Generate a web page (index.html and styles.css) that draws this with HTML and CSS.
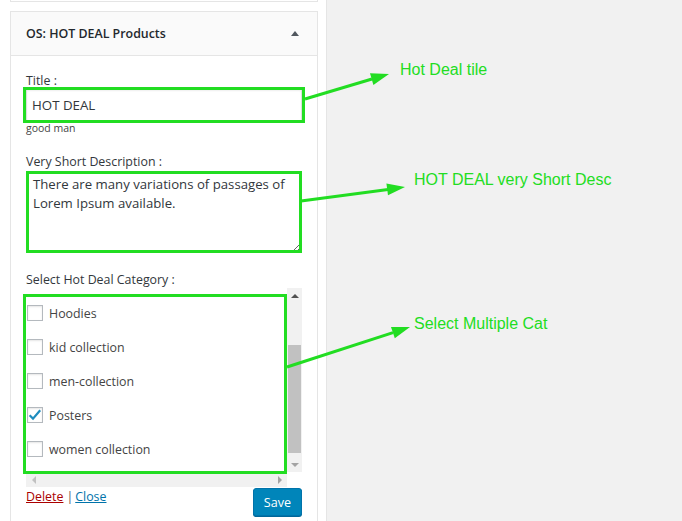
FILE: index.html
```html
<!DOCTYPE html>
<html lang="en">
<head>
<meta charset="utf-8">
<title>OS: HOT DEAL Products</title>
<link rel="stylesheet" href="styles.css">
</head>
<body>
<div class="page">
  <aside class="sidebar">
    <div class="prev-widget"></div>
    <div class="widget">
      <div class="widget-top">
        <h3 class="widget-title">OS: HOT DEAL Products</h3>
        <span class="toggle-arrow"></span>
      </div>
      <div class="widget-inside">
        <label class="field-label" for="title">Title :</label>
        <input id="title" class="text-input" type="text" value="HOT DEAL">
        <div class="hint">good man</div>
        <label class="field-label desc-label" for="desc">Very Short Description :</label>
        <textarea id="desc" class="text-area">There are many variations of passages of Lorem Ipsum available.</textarea>
        <div class="field-label cat-label">Select Hot Deal Category :</div>
        <div class="listbox">
          <ul class="cat-list">
            <li class="cat-item"><span class="cb"></span>Hoodies</li>
            <li class="cat-item"><span class="cb"></span>kid collection</li>
            <li class="cat-item"><span class="cb"></span>men-collection</li>
            <li class="cat-item"><span class="cb"><svg class="check" viewBox="0 0 16 16"><path d="M2.6 8.2 L6 11.6 L13.2 3.2"/></svg></span>Posters</li>
            <li class="cat-item"><span class="cb"></span>women collection</li>
          </ul>
          <div class="vscroll">
            <div class="sb-btn"><span class="tri-up"></span></div>
            <div class="sb-track"><div class="sb-thumb"></div></div>
            <div class="sb-btn"><span class="tri-down"></span></div>
          </div>
          <div class="hscroll">
            <div class="sb-btn-h"><span class="tri-left"></span></div>
            <div class="sb-btn-h"><span class="tri-right"></span></div>
          </div>
          <div class="sb-corner"></div>
        </div>
        <div class="widget-actions">
          <div class="links"><a class="link-delete" href="#">Delete</a><span class="sep">|</span><a class="link-close" href="#">Close</a></div>
          <button class="save-btn" type="button">Save</button>
        </div>
      </div>
    </div>
  </aside>
  <svg class="annotations" width="682" height="521" viewBox="0 0 682 521">
    <g class="ann-stroke">
      <rect x="24.5" y="88.5" width="279" height="33"/>
      <rect x="27.5" y="172.5" width="273" height="79"/>
      <rect x="24.5" y="295.5" width="261" height="177"/>
      <line x1="305" y1="99" x2="372" y2="79"/>
      <line x1="301" y1="201" x2="388" y2="189.5"/>
      <line x1="287" y1="367" x2="393" y2="332.6"/>
    </g>
    <g class="ann-fill">
      <polygon points="389,74 370,73.3 373.4,84.9"/>
      <polygon points="405,187 386.4,183.5 388,195.3"/>
      <polygon points="410,327 391,326.9 394.8,338.3"/>
    </g>
    <g class="ann-text">
      <text x="400" y="75">Hot Deal tile</text>
      <text x="414" y="185">HOT DEAL very Short Desc</text>
      <text x="414" y="329">Select Multiple Cat</text>
    </g>
  </svg>
</div>
</body>
</html>
```
FILE: styles.css
```css
* { box-sizing: border-box; }
html, body { margin: 0; padding: 0; }
body {
  background: #f1f1f1;
  font-family: "Open Sans", "Segoe UI", sans-serif;
  color: #32373c;
  width: 682px;
  height: 521px;
  overflow: hidden;
}
.page { position: relative; width: 682px; height: 521px; }

.sidebar {
  width: 327px;
  height: 521px;
  background: #fff;
  border-right: 1px solid #e5e5e5;
  padding-left: 10px;
}
.prev-widget {
  width: 308px;
  height: 2px;
  border: 1px solid #e5e5e5;
  border-top: none;
}
.widget {
  width: 308px;
  margin-top: 9px;
  border: 1px solid #e5e5e5;
  background: #fff;
}
.widget-top {
  height: 44px;
  background: #fafafa;
  border-bottom: 1px solid #e5e5e5;
  display: flex;
  align-items: center;
  justify-content: space-between;
  padding: 0 18px 0 15px;
}
.widget-title {
  margin: 0;
  font-size: 12.4px;
  font-weight: 600;
  color: #23282d;
}
.toggle-arrow {
  width: 0;
  height: 0;
  border-left: 4px solid transparent;
  border-right: 4px solid transparent;
  border-bottom: 5px solid #50575e;
}
.widget-inside { padding: 17px 15px 15px; }

.field-label {
  display: block;
  font-size: 12.4px;
  line-height: 16px;
  color: #32373c;
}
.text-input {
  display: block;
  width: 100%;
  height: 32px;
  margin: 0;
  padding: 0 5px;
  border: 1px solid #ddd;
  box-shadow: inset 0 1px 2px rgba(0,0,0,.07);
  background: #fff;
  font-family: inherit;
  font-size: 13.3px;
  color: #32373c;
  outline: none;
}
.hint {
  padding-top: 1px;
  font-size: 10.5px;
  line-height: 13px;
  color: #444;
}
.desc-label { margin-top: 19px; }
.text-area {
  display: block;
  width: 100%;
  height: 82px;
  margin: 1px 0 0;
  padding: 3px 6px;
  border: 1px solid #ddd;
  box-shadow: inset 0 1px 2px rgba(0,0,0,.07);
  background: #fff;
  font-family: inherit;
  font-size: 13.2px;
  line-height: 18.5px;
  color: #32373c;
  outline: none;
}
.cat-label { margin-top: 19px; }

.listbox {
  display: grid;
  grid-template-columns: 261px 15px;
  grid-template-rows: 184px 15px;
  width: 276px;
  background: #fff;
}
.cat-list {
  list-style: none;
  margin: 0;
  padding: 8px 0 0 1px;
  overflow: hidden;
}
.cat-item {
  height: 34px;
  display: flex;
  align-items: center;
  gap: 6px;
  font-size: 12.4px;
  color: #444;
}
.cb {
  width: 16px;
  height: 16px;
  flex: none;
  border: 1px solid #b4b9be;
  background: #fff;
  box-shadow: inset 0 1px 2px rgba(0,0,0,.1);
  position: relative;
}
.check {
  position: absolute;
  left: -1px;
  top: -1px;
  width: 16px;
  height: 16px;
  fill: none;
  stroke: #1e8cbe;
  stroke-width: 2.2;
}
.vscroll {
  background: #f1f1f1;
  display: flex;
  flex-direction: column;
}
.sb-btn {
  height: 15px;
  display: flex;
  align-items: center;
  justify-content: center;
}
.sb-track { flex: 1; padding: 42px 1px 0; }
.sb-thumb { height: 108px; background: #c1c1c1; }
.tri-up {
  border-left: 4px solid transparent;
  border-right: 4px solid transparent;
  border-bottom: 4px solid #505050;
}
.tri-down {
  border-left: 4px solid transparent;
  border-right: 4px solid transparent;
  border-top: 4px solid #a3a3a3;
}
.hscroll {
  background: #f1f1f1;
  display: flex;
  justify-content: space-between;
}
.sb-btn-h {
  width: 15px;
  display: flex;
  align-items: center;
  justify-content: center;
}
.tri-left {
  border-top: 4px solid transparent;
  border-bottom: 4px solid transparent;
  border-right: 4px solid #c1c1c1;
}
.tri-right {
  border-top: 4px solid transparent;
  border-bottom: 4px solid transparent;
  border-left: 4px solid #a3a3a3;
}
.sb-corner { background: #fff; }

.widget-actions {
  margin-top: 1px;
  display: flex;
  justify-content: space-between;
  align-items: flex-start;
}
.links {
  margin-top: 1px;
  font-size: 12.4px;
  line-height: 16px;
  color: #555;
}
.sep { margin: 0 2px 0 3px; }
.link-delete { color: #a00; text-decoration: underline; }
.link-close { color: #0073aa; text-decoration: underline; }
.save-btn {
  width: 49px;
  height: 28px;
  padding: 0;
  border: 1px solid #0073aa;
  border-radius: 3px;
  background: #0085ba;
  box-shadow: 0 1px 0 #006799;
  color: #fff;
  font-family: inherit;
  font-size: 12.6px;
}

.annotations {
  position: absolute;
  left: 0;
  top: 0;
  pointer-events: none;
}
.ann-stroke { fill: none; stroke: #22dd22; stroke-width: 3; }
.ann-fill { fill: #22dd22; }
.ann-text {
  font-family: "Liberation Sans", Arial, sans-serif;
  font-size: 16px;
  fill: #22dd22;
}
```
